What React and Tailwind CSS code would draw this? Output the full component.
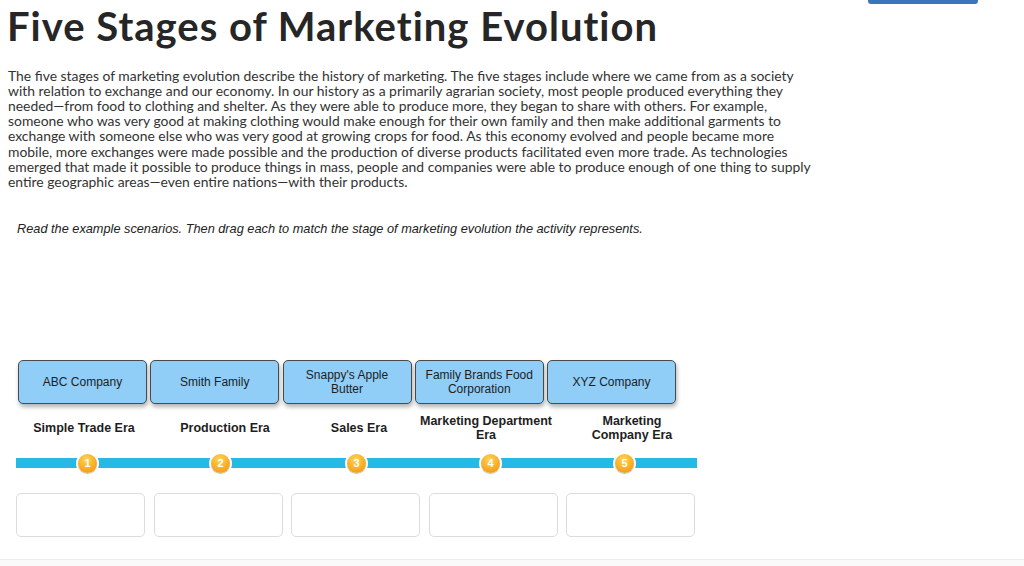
import React from "react";

const cards = [["ABC Company"], ["Smith Family"], ["Snappy's Apple", "Butter"], ["Family Brands Food", "Corporation"], ["XYZ Company"]];
const labels = [
  { t: ["Simple Trade Era"], w: "w-[136px]" },
  { t: ["Production Era"], w: "w-[146px]" },
  { t: ["Sales Era"], w: "w-[122px]" },
  { t: ["Marketing Department", "Era"], w: "w-[132px]" },
  { t: ["Marketing", "Company Era"], w: "w-[160px]" },
];
const badgeLeft = [60, 193, 329, 463, 597];
const para = [
  "The five stages of marketing evolution describe the history of marketing. The five stages include where we came from as a society",
  "with relation to exchange and our economy. In our history as a primarily agrarian society, most people produced everything they",
  "needed—from food to clothing and shelter. As they were able to produce more, they began to share with others. For example,",
  "someone who was very good at making clothing would make enough for their own family and then make additional garments to",
  "exchange with someone else who was very good at growing crops for food. As this economy evolved and people became more",
  "mobile, more exchanges were made possible and the production of diverse products facilitated even more trade. As technologies",
  "emerged that made it possible to produce things in mass, people and companies were able to produce enough of one thing to supply",
  "entire geographic areas—even entire nations—with their products.",
];

function Badge({ n, left }) {
  return (
    <div
      className="absolute top-[-6px] w-[23px] h-[23px] rounded-full bg-white flex items-center justify-center"
      style={{ left }}
    >
      <div className="w-[19px] h-[19px] rounded-full bg-[radial-gradient(circle_at_45%_30%,#fdd55c_0%,#fab52a_45%,#ef8e10_100%)] shadow-[0_1px_1px_rgba(0,0,0,0.25)] flex items-center justify-center text-white font-bold text-[11px] leading-none font-['Liberation_Sans',Arial,sans-serif]">
        {n}
      </div>
    </div>
  );
}

export default function App() {
  return (
    <div className="relative w-[1024px] h-[566px] bg-white overflow-hidden text-[#2b2b2b]">
      <div className="absolute left-[868px] top-0 w-[110px] h-[4px] bg-[#3a77ba] rounded-b-[3px]" />
      <div className="flex flex-col h-[559px]">
        <h1 className="ml-[7px] mt-[2px] text-[40px] leading-[48px] font-bold font-['Lato',sans-serif] text-[#262626] tracking-[1px] whitespace-nowrap">
          Five Stages of Marketing Evolution
        </h1>
        <p className="ml-[8px] mt-[17.5px] text-[13.9px] leading-[15.2px] font-['Lato',sans-serif] text-[#333] whitespace-nowrap">
          {para.map((l, i) => (
            <span key={i} className="block">
              {l}
            </span>
          ))}
        </p>
        <p className="ml-[17px] mt-[32px] text-[12.75px] leading-[15px] italic font-['Liberation_Sans',Arial,sans-serif] text-[#222] whitespace-nowrap">
          Read the example scenarios. Then drag each to match the stage of marketing evolution the activity represents.
        </p>
        <div className="ml-[18px] mt-[123.5px] flex gap-[3.25px]">
          {cards.map((c, i) => (
            <div
              key={i}
              className="w-[129px] h-[44px] rounded-[5px] border border-[#4a4a4a] bg-[#90cdf7] shadow-[1px_3px_4px_rgba(0,0,0,0.3)] flex flex-col items-center justify-center text-center text-[12px] leading-[14px] text-[#1e1e1e] font-['Liberation_Sans',Arial,sans-serif] whitespace-nowrap"
            >
              {c.map((t) => (
                <span key={t}>{t}</span>
              ))}
            </div>
          ))}
        </div>
        <div className="ml-[16px] mt-[10px] flex h-[28px] items-center">
          {labels.map((l, i) => (
            <div
              key={i}
              className={`${l.w} flex flex-col items-center text-center text-[12.5px] leading-[14px] font-bold text-[#1e1e1e] font-['Liberation_Sans',Arial,sans-serif] whitespace-nowrap`}
            >
              {l.t.map((t) => (
                <span key={t}>{t}</span>
              ))}
            </div>
          ))}
        </div>
        <div className="relative ml-[16px] mt-[16px] w-[681px] h-[10px] bg-[#25b9e4]">
          {badgeLeft.map((l, i) => (
            <Badge key={i} n={i + 1} left={l} />
          ))}
        </div>
        <div className="ml-[16px] mt-[25px] flex gap-[8.5px]">
          {[0, 1, 2, 3, 4].map((i) => (
            <div key={i} className="w-[129px] h-[44px] rounded-[5px] border border-[#dcdcdc] bg-white" />
          ))}
        </div>
      </div>
      <div className="h-[7px] border-t border-[#ececec] bg-[#fafafa]" />
    </div>
  );
}
